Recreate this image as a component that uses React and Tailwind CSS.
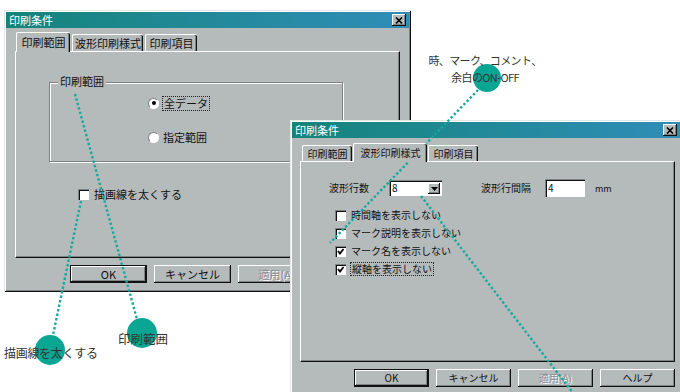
import React from "react";

function CloseBtn() {
  return (
    <div className="w-[14px] h-[12px] bg-[#b5babb] flex items-center justify-center shadow-[inset_-1px_-1px_0_#111,inset_1px_1px_0_#fff,inset_-2px_-2px_0_#7d8282]">
      <svg width="8" height="7" viewBox="0 0 8 7">
        <path d="M1 0.5 L7 6.5 M7 0.5 L1 6.5" stroke="#000" strokeWidth="1.6" />
      </svg>
    </div>
  );
}

function TitleBar() {
  return (
    <div className="h-[16px] shrink-0 flex items-center justify-between bg-linear-to-r from-[#14847a] to-[#2f8db8] pl-[3px] pr-[3px]">
      <span className="text-white text-[11px] leading-none">印刷条件</span>
      <CloseBtn />
    </div>
  );
}

function Tab({ label, selected, className }) {
  return (
    <div
      className={
        selected
          ? "relative z-10 -mb-px flex items-center justify-center bg-[#b5babb] border-t border-l border-white rounded-tl-[2px] rounded-tr-[2px] shadow-[inset_-1px_0_0_#111,inset_-2px_0_0_#7d8282] leading-none " + className
          : "flex items-center justify-center bg-[#b5babb] border-t border-l border-white rounded-tl-[2px] rounded-tr-[2px] shadow-[inset_-1px_0_0_#111,inset_-2px_0_0_#7d8282] leading-none " + className
      }
    >
      {label}
    </div>
  );
}

function Button({ label, isDefault, disabled, className }) {
  if (isDefault) {
    return (
      <div className={"border border-[#111] bg-[#b5babb] " + className}>
        <div className="w-full h-full flex items-center justify-center shadow-[inset_-1px_-1px_0_#111,inset_1px_1px_0_#fff,inset_-2px_-2px_0_#7d8282] leading-none">
          {label}
        </div>
      </div>
    );
  }
  return (
    <div
      className={
        disabled
          ? "flex items-center justify-center bg-[#b5babb] shadow-[inset_-1px_-1px_0_#111,inset_1px_1px_0_#fff,inset_-2px_-2px_0_#7d8282] leading-none text-[#8a8f90] [text-shadow:1px_1px_0_#fff] " + className
          : "flex items-center justify-center bg-[#b5babb] shadow-[inset_-1px_-1px_0_#111,inset_1px_1px_0_#fff,inset_-2px_-2px_0_#7d8282] leading-none " + className
      }
    >
      {label}
    </div>
  );
}

function CheckBox({ checked }) {
  return (
    <div className="w-[11px] h-[11px] shrink-0 bg-white flex items-center justify-center shadow-[inset_1px_1px_0_#7d8282,inset_2px_2px_0_#111,inset_-1px_-1px_0_#fff]">
      {checked ? (
        <svg width="9" height="9" viewBox="0 0 9 9">
          <polyline points="2,4 4,6.5 7.5,2" fill="none" stroke="#000" strokeWidth="1.8" />
        </svg>
      ) : null}
    </div>
  );
}

function Radio({ checked }) {
  return (
    <div className="w-[11px] h-[11px] shrink-0 rounded-full bg-white border border-t-[#7d8282] border-l-[#7d8282] border-r-white border-b-white flex items-center justify-center">
      {checked ? <div className="w-[4px] h-[4px] rounded-full bg-black" /> : null}
    </div>
  );
}

export default function App() {
  return (
    <div className="relative w-[680px] h-[392px] bg-white overflow-hidden font-['Noto_Sans_CJK_JP',sans-serif] text-[#111]">
      {/* Left dialog */}
      <div className="absolute left-[4px] top-[10px] w-[407px] h-[282px] bg-[#b5babb] p-[2px] flex flex-col shadow-[inset_1px_1px_0_#e3e7e7,inset_-1px_-1px_0_#111,inset_2px_2px_0_#fff,inset_-2px_-2px_0_#7d8282] text-[11px]">
        <TitleBar />
        <div className="px-[9px] pt-[3px] flex flex-col">
          <div className="flex items-end h-[20px]">
            <Tab label="印刷範囲" selected className="ml-[1px] w-[54px] h-[20px]" />
            <Tab label="波形印刷様式" className="ml-[2px] w-[71px] h-[17px]" />
            <Tab label="印刷項目" className="ml-[2px] w-[52px] h-[17px]" />
          </div>
          <div className="h-[207px] flex flex-col border-t border-l border-white border-r border-b border-r-[#111] border-b-[#111] shadow-[inset_-1px_-1px_0_#7d8282]">
            <div className="relative ml-[33px] mt-[30px] w-[294px] h-[80px] border border-[#7d8282] shadow-[inset_1px_1px_0_#fff,1px_1px_0_#fff]">
              <span className="absolute -top-[7px] left-[8px] px-[2px] bg-[#b5babb] leading-none">印刷範囲</span>
              <div className="flex flex-col pl-[98px] pt-[14px] gap-[22px]">
                <div className="flex items-center h-[12px] gap-[3px]">
                  <Radio checked />
                  <span className="leading-none border border-dotted border-[#222] px-[1px] py-[1px]">全データ</span>
                </div>
                <div className="flex items-center h-[12px] gap-[4px]">
                  <Radio />
                  <span className="leading-none">指定範囲</span>
                </div>
              </div>
            </div>
            <div className="flex items-center ml-[62px] mt-[26px] gap-[5px] h-[12px]">
              <CheckBox />
              <span className="leading-none">描画線を太くする</span>
            </div>
          </div>
          <div className="flex mt-[7px] ml-[55px] gap-[7px]">
            <Button label="OK" isDefault className="w-[77px] h-[18px]" />
            <Button label="キャンセル" className="w-[77px] h-[18px]" />
            <Button label="適用(A)" disabled className="w-[77px] h-[18px]" />
          </div>
        </div>
      </div>

      {/* Right dialog */}
      <div className="absolute left-[290px] top-[120px] w-[395px] h-[290px] bg-[#b5babb] p-[2px] flex flex-col shadow-[inset_1px_1px_0_#e3e7e7,inset_-1px_-1px_0_#111,inset_2px_2px_0_#fff,inset_-2px_-2px_0_#7d8282] text-[10px]">
        <div className="pr-[3px]">
          <TitleBar />
        </div>
        <div className="px-[8px] pt-[3px] flex flex-col">
          <div className="flex items-end h-[20px]">
            <Tab label="印刷範囲" className="ml-[2px] w-[50px] h-[16px]" />
            <Tab label="波形印刷様式" selected className="ml-[1px] w-[74px] h-[19px]" />
            <Tab label="印刷項目" className="ml-[1px] w-[50px] h-[16px]" />
          </div>
          <div className="h-[201px] flex flex-col border-t border-l border-white border-r border-b border-r-[#111] border-b-[#111] shadow-[inset_-1px_-1px_0_#7d8282]">
            <div className="flex items-center h-[18px] mt-[17px] ml-[28px]">
              <span className="leading-none">波形行数</span>
              <div className="ml-[20px] w-[53px] h-[16px] bg-white flex items-center justify-between pl-[3px] pr-[2px] shadow-[inset_1px_1px_0_#7d8282,inset_2px_2px_0_#111,inset_-1px_-1px_0_#fff]">
                <span className="leading-none">8</span>
                <div className="w-[12px] h-[11px] mt-[1px] bg-[#b5babb] flex items-center justify-center shadow-[inset_-1px_-1px_0_#111,inset_1px_1px_0_#fff,inset_-2px_-2px_0_#7d8282]">
                  <svg width="7" height="4" viewBox="0 0 7 4">
                    <polygon points="0,0 7,0 3.5,4" fill="#000" />
                  </svg>
                </div>
              </div>
              <span className="leading-none ml-[39px]">波形行間隔</span>
              <div className="ml-[14px] w-[40px] h-[18px] bg-white flex items-center pl-[3px] shadow-[inset_1px_1px_0_#7d8282,inset_2px_2px_0_#111,inset_-1px_-1px_0_#fff]">
                <span className="leading-none">4</span>
              </div>
              <span className="leading-none ml-[10px] text-[9px]">mm</span>
            </div>
            <div className="flex flex-col mt-[9px] ml-[34px]">
              <div className="flex items-center h-[18px] gap-[5px]">
                <CheckBox />
                <span className="leading-none">時間軸を表示しない</span>
              </div>
              <div className="flex items-center h-[18px] gap-[5px]">
                <CheckBox />
                <span className="leading-none">マーク説明を表示しない</span>
              </div>
              <div className="flex items-center h-[18px] gap-[5px]">
                <CheckBox checked />
                <span className="leading-none">マーク名を表示しない</span>
              </div>
              <div className="flex items-center h-[18px] gap-[4px]">
                <CheckBox checked />
                <span className="leading-none border border-dotted border-[#222] px-[1px] py-[1px]">縦軸を表示しない</span>
              </div>
            </div>
          </div>
          <div className="flex mt-[7px] ml-[54px] gap-[7px]">
            <Button label="OK" isDefault className="w-[76px] h-[18px]" />
            <Button label="キャンセル" className="w-[76px] h-[18px]" />
            <Button label="適用(A)" disabled className="w-[76px] h-[18px]" />
            <Button label="ヘルプ" className="w-[76px] h-[18px]" />
          </div>
        </div>
      </div>

      {/* Annotations */}
      <svg className="absolute inset-0 pointer-events-none" width="680" height="392" viewBox="0 0 680 392">
        <g stroke="#17a99e" strokeWidth="2.4" strokeDasharray="2.4 2.2" fill="none">
          <line x1="478" y1="90" x2="330" y2="243" />
          <line x1="421" y1="196" x2="580" y2="402" />
          <line x1="81" y1="201" x2="52" y2="340" />
          <line x1="75" y1="94" x2="140" y2="330" />
        </g>
        <circle cx="487" cy="78" r="14" fill="#0ba594" />
        <circle cx="50" cy="350" r="15" fill="#0ba594" />
        <circle cx="142" cy="333" r="15" fill="#0ba594" />
      </svg>
      <div className="absolute left-[426px] top-[52px] w-[118px] flex flex-col items-center text-[#333] text-[11px] leading-[17px] tracking-[-0.6px]">
        <span>時、マーク、コメント、</span>
        <span>余白のON-OFF</span>
      </div>
      <span className="absolute left-[4px] top-[344px] text-[12px] leading-[17px] text-[#333] tracking-[-0.3px]">描画線を太くする</span>
      <span className="absolute left-[118px] top-[330px] text-[12.5px] leading-[17px] text-[#333]">印刷範囲</span>
    </div>
  );
}
